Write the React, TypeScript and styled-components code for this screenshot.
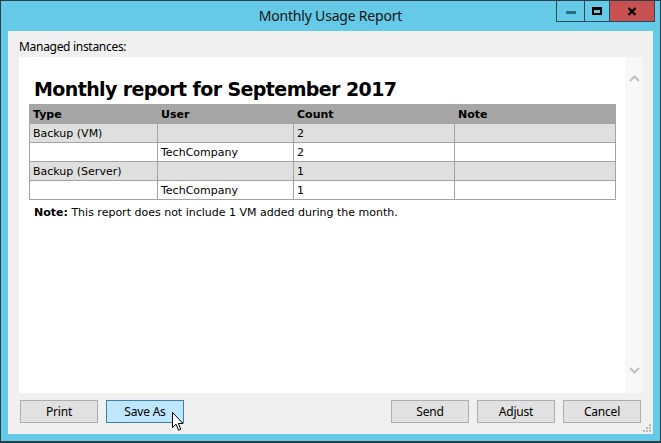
import React from "react";
import styled, { createGlobalStyle } from "styled-components";

const GlobalStyle = createGlobalStyle`
  html, body {
    margin: 0;
    padding: 0;
    width: 661px;
    height: 443px;
    overflow: hidden;
    background: #ffffff;
  }
  * {
    box-sizing: border-box;
  }
`;

interface UsageRow {
  type: string;
  user: string;
  count: number;
  note: string;
  shaded: boolean;
}

const rows: UsageRow[] = [
  { type: "Backup (VM)", user: "", count: 2, note: "", shaded: true },
  { type: "", user: "TechCompany", count: 2, note: "", shaded: false },
  { type: "Backup (Server)", user: "", count: 1, note: "", shaded: true },
  { type: "", user: "TechCompany", count: 1, note: "", shaded: false },
];

const ChevronUp = () => (
  <svg width="11" height="7" viewBox="0 0 11 7">
    <path d="M1 6 L5.5 1.5 L10 6" fill="none" stroke="#c3c3c3" strokeWidth="2.2" />
  </svg>
);

const ChevronDown = () => (
  <svg width="11" height="7" viewBox="0 0 11 7">
    <path d="M1 1 L5.5 5.5 L10 1" fill="none" stroke="#c3c3c3" strokeWidth="2.2" />
  </svg>
);

const ArrowCursor = () => (
  <svg width="13" height="20" viewBox="0 0 13 20">
    <path
      d="M0.5 0.5 L0.5 15.5 L4 12.2 L6.6 18.3 L8.8 17.3 L6.3 11.5 L11 11.5 Z"
      fill="#ffffff"
      stroke="#000000"
      strokeWidth="1"
      strokeLinejoin="miter"
    />
  </svg>
);

const ResizeGrip = () => (
  <svg width="10" height="10" viewBox="0 0 10 10">
    {[
      [7, 1],
      [4, 4],
      [7, 4],
      [1, 7],
      [4, 7],
      [7, 7],
    ].map(([x, y]) => (
      <rect key={`${x}-${y}`} x={x} y={y} width="2" height="2" fill="#bcbcbc" />
    ))}
  </svg>
);

export default function App() {
  return (
    <>
      <GlobalStyle />
      <Window>
        <TitleBar>
          <span />
          <Title>Monthly Usage Report</Title>
          <Controls>
            <CtrlButton $w={27}>
              <MinGlyph />
            </CtrlButton>
            <CtrlButton $w={25}>
              <MaxGlyph />
            </CtrlButton>
            <CtrlButton $w={45} $bg="#c75050">
              <svg width="10" height="9" viewBox="0 0 10 9">
                <path d="M1.5 1 L8.5 8 M8.5 1 L1.5 8" stroke="#000" strokeWidth="2.4" />
              </svg>
            </CtrlButton>
          </Controls>
        </TitleBar>

        <Client>
          <Label>Managed instances:</Label>
          <Panel>
            <Content>
              <Heading>Monthly report for September 2017</Heading>
              <ReportTable>
                <colgroup>
                  <col style={{ width: 128 }} />
                  <col style={{ width: 136 }} />
                  <col style={{ width: 161 }} />
                  <col style={{ width: 161 }} />
                </colgroup>
                <thead>
                  <tr>
                    <Th>Type</Th>
                    <Th>User</Th>
                    <Th>Count</Th>
                    <Th>Note</Th>
                  </tr>
                </thead>
                <tbody>
                  {rows.map((r, i) => (
                    <Row key={i} $shaded={r.shaded}>
                      <Td>{r.type}</Td>
                      <Td>{r.user}</Td>
                      <Td>{r.count}</Td>
                      <Td>{r.note}</Td>
                    </Row>
                  ))}
                </tbody>
              </ReportTable>
              <Note>
                <b>Note:</b> This report does not include 1 VM added during the month.
              </Note>
            </Content>
            <ScrollTrack>
              <ChevronUp />
              <ChevronDown />
            </ScrollTrack>
          </Panel>

          <ButtonRow>
            <DialogButton>Print</DialogButton>
            <ButtonSlot>
              <DialogButton $hover>Save As</DialogButton>
              <CursorMark>
                <ArrowCursor />
              </CursorMark>
            </ButtonSlot>
            <Spacer />
            <DialogButton>Send</DialogButton>
            <DialogButton>Adjust</DialogButton>
            <DialogButton>Cancel</DialogButton>
          </ButtonRow>

          <GripMark>
            <ResizeGrip />
          </GripMark>
        </Client>
      </Window>
    </>
  );
}

// Styled components
const Window = styled.div`
  width: 661px;
  height: 443px;
  display: flex;
  flex-direction: column;
  background: #65c9e8;
  border: 1px solid #2c3f47;
  border-bottom-width: 2px;
`;

const TitleBar = styled.div`
  height: 30px;
  flex-shrink: 0;
  display: grid;
  grid-template-columns: 1fr auto 1fr;
  align-items: start;
`;

const Title = styled.div`
  font-family: "Noto Sans", "Open Sans", sans-serif;
  font-size: 14px;
  line-height: 30px;
  color: #151515;
  letter-spacing: -0.2px;
`;

const Controls = styled.div`
  justify-self: end;
  display: flex;
  margin-right: 5px;
  border: 1px solid #2c4956;
  border-top: none;
`;

const CtrlButton = styled.div<{ $w: number; $bg?: string }>`
  width: ${(p) => p.$w}px;
  height: 20px;
  display: flex;
  align-items: center;
  justify-content: center;
  background: ${(p) => p.$bg || "transparent"};

  & + & {
    border-left: 1px solid #2c4956;
  }
`;

const MinGlyph = styled.span`
  display: block;
  width: 10px;
  height: 3px;
  margin-top: 2px;
  background: #2d6b80;
`;

const MaxGlyph = styled.span`
  display: block;
  width: 10px;
  height: 8px;
  border: 2px solid #000;
  border-top-width: 3px;
`;

const Client = styled.div`
  flex: 1;
  position: relative;
  margin: 0 7px 7px;
  padding: 0 10px 11px 11px;
  background: #f0f0f0;
  display: flex;
  flex-direction: column;
`;

const Label = styled.div`
  height: 26px;
  padding-top: 8px;
  font-family: "Noto Sans", "Open Sans", sans-serif;
  font-size: 12px;
  line-height: 16px;
  letter-spacing: -0.3px;
  color: #000;
`;

const Panel = styled.div`
  height: 336px;
  flex-shrink: 0;
  display: flex;
  background: #ffffff;
`;

const Content = styled.div`
  flex: 1;
  padding: 20px 10px 0 10px;
  overflow: hidden;
`;

const Heading = styled.h1`
  margin: 0 0 3px 5px;
  font-family: "DejaVu Sans", Verdana, sans-serif;
  font-weight: bold;
  font-size: 19px;
  line-height: 24px;
  letter-spacing: -0.6px;
  color: #000;
`;

const ReportTable = styled.table`
  width: 586px;
  table-layout: fixed;
  border-collapse: collapse;
  font-family: "DejaVu Sans", Verdana, sans-serif;
  font-size: 11px;
  color: #000;
`;

const Th = styled.th`
  height: 19px;
  padding: 0 3px;
  text-align: left;
  font-weight: bold;
  background: #a6a6a6;
  border: 1px solid #a6a6a6;
`;

const Row = styled.tr<{ $shaded: boolean }>`
  height: 19px;
  background: ${(p) => (p.$shaded ? "#dfdfdf" : "#ffffff")};
`;

const Td = styled.td`
  padding: 0 3px;
  border: 1px solid #a3a3a3;
  white-space: nowrap;
`;

const Note = styled.p`
  margin: 6px 0 0 5px;
  font-family: "DejaVu Sans", Verdana, sans-serif;
  font-size: 11px;
  line-height: 14px;
  color: #000;
`;

const ScrollTrack = styled.div`
  width: 18px;
  flex-shrink: 0;
  background: #f8f8f8;
  display: flex;
  flex-direction: column;
  justify-content: space-between;
  align-items: center;
  padding: 18px 0 19px;
`;

const ButtonRow = styled.div`
  margin-top: 7px;
  display: flex;
  gap: 8px;
  padding: 0 2px 0 1px;
`;

const Spacer = styled.div`
  flex: 1;
`;

const ButtonSlot = styled.div`
  position: relative;
`;

const DialogButton = styled.button<{ $hover?: boolean }>`
  width: 78px;
  height: 23px;
  padding: 0;
  margin: 0;
  font-family: "Noto Sans", "Open Sans", sans-serif;
  font-size: 12px;
  letter-spacing: -0.2px;
  color: #000;
  background: ${(p) => (p.$hover ? "#bee6fd" : "#e1e1e1")};
  border: 1px solid ${(p) => (p.$hover ? "#3c7fb1" : "#adadad")};
  border-radius: 0;
`;

const CursorMark = styled.div`
  position: absolute;
  left: 66px;
  top: 12px;
  line-height: 0;
  pointer-events: none;
`;

const GripMark = styled.div`
  position: absolute;
  right: 1px;
  bottom: 1px;
  line-height: 0;
`;
